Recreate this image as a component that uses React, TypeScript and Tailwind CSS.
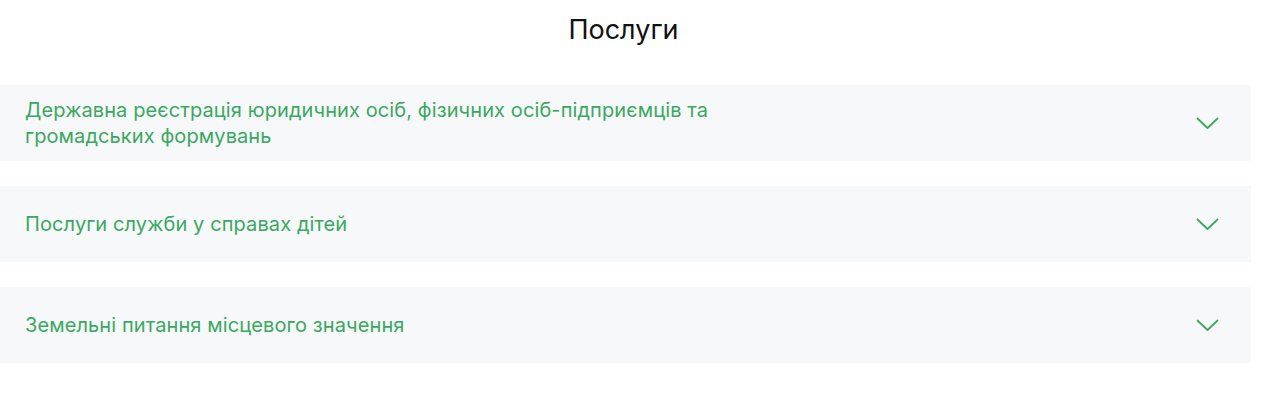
const services = [
  'Державна реєстрація юридичних осіб, фізичних осіб-підприємців та громадських формувань',
  'Послуги служби у справах дітей',
  'Земельні питання місцевого значення',
]

function Chevron() {
  return (
    <svg width="23" height="13" viewBox="0 0 23 13" fill="none" className="shrink-0">
      <polyline
        points="1.5,1.5 11.5,11 21.5,1.5"
        stroke="#3aa860"
        strokeWidth="1.8"
        strokeLinecap="round"
        strokeLinejoin="round"
      />
    </svg>
  )
}

export default function App() {
  return (
    <div
      className="w-[1280px] h-[401px] bg-white"
      style={{ fontFamily: 'Inter, "Noto Sans", sans-serif' }}
    >
      <section className="w-[1251px] pt-[12px]">
        <h2 className="text-center text-[27px] leading-9 text-[#111] pr-[4px]">Послуги</h2>

        <div className="mt-[37px] flex flex-col gap-[25px]">
          {services.map((title) => (
            <div
              key={title}
              className="flex h-[76px] items-center justify-between bg-[#f7f8fa] pl-[25px] pr-[32px]"
            >
              <p className="max-w-[720px] text-[20px] leading-[26px] tracking-[0.1px] text-[#3aa860]">
                {title}
              </p>
              <Chevron />
            </div>
          ))}
        </div>
      </section>
    </div>
  )
}
